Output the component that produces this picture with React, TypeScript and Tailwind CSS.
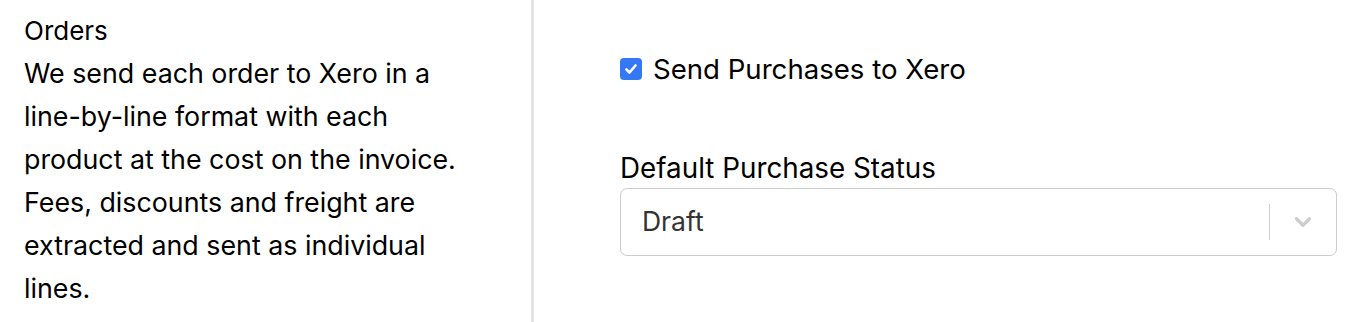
import { ChevronDown } from 'lucide-react';

export default function App() {
  return (
    <div className="flex h-[322px] w-[1368px] bg-white font-['Inter',sans-serif] text-black">
      {/* Description */}
      <div className="w-[534px] shrink-0 border-r-[3px] border-[#e4e4e7] pl-6 pt-[9px]">
        <h3 className="text-[26px] leading-[43px]">Orders</h3>
        <p className="w-[450px] text-[26.8px] leading-[43px]">
          We send each order to Xero in a line-by-line format with each product at the cost on the
          invoice. Fees, discounts and freight are extracted and sent as individual lines.
        </p>
      </div>

      {/* Settings */}
      <div className="flex-1 pl-[86px] pr-[31px] pt-[54px]">
        <label className="flex items-center gap-[11px] text-[27.6px] leading-[30px]">
          <span className="flex h-[22px] w-[22px] items-center justify-center rounded-[4px] bg-[#3478f6]">
            <svg viewBox="0 0 16 16" className="h-[16px] w-[16px]" fill="none" stroke="white" strokeWidth="2.6" strokeLinecap="round" strokeLinejoin="round">
              <path d="M3.5 8.5l3 3 6-7" />
            </svg>
          </span>
          Send Purchases to Xero
        </label>

        <div className="mt-[69px] text-[27.8px] leading-[30px]">Default Purchase Status</div>
        <div className="mt-[5px] flex h-[68px] items-center rounded-[7px] border border-[#cccccc] bg-white pl-[21px]">
          <span className="flex-1 text-[26.5px] text-[#333333]">Draft</span>
          <span className="h-[36px] w-px bg-[#cccccc]" />
          <span className="flex w-[66px] justify-center text-[#cccccc]">
            <ChevronDown size={26} strokeWidth={3} />
          </span>
        </div>
      </div>
    </div>
  );
}
